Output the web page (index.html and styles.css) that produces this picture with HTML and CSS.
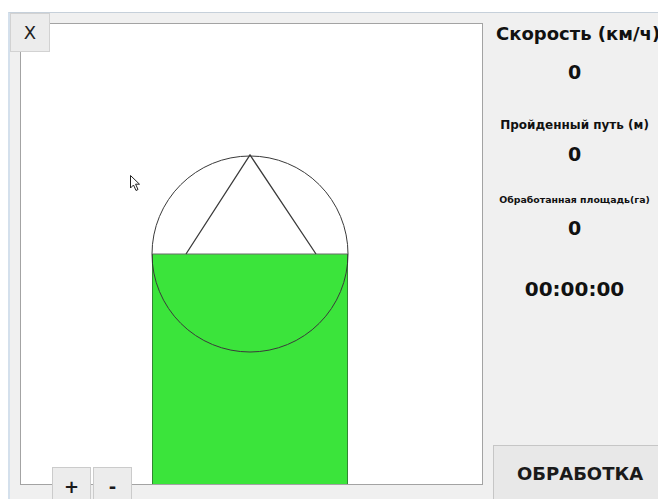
FILE: index.html
```html
<!DOCTYPE html>
<html lang="ru">
<head>
<meta charset="utf-8">
<title>Обработка поля</title>
<link rel="stylesheet" href="styles.css">
</head>
<body>
<div class="window">
  <div class="map-pane">
    <div class="map">
      <svg class="map-drawing" width="461" height="460" viewBox="21 24 461 460" xmlns="http://www.w3.org/2000/svg">
        <!-- processed strip -->
        <rect x="152" y="254" width="196" height="232" fill="#3be43b"/>
        <!-- implement marker: circle with heading triangle -->
        <circle cx="250" cy="254" r="98" fill="none" stroke="#3a3a3a" stroke-width="1"/>
        <line x1="152" y1="254" x2="348" y2="254" stroke="#6a6a6a" stroke-width="1.2"/>
        <polyline points="186,254 250,155 316,254" fill="none" stroke="#3a3a3a" stroke-width="1.3"/>
        <line x1="152.5" y1="254" x2="152.5" y2="486" stroke="#2a2a2a" stroke-width="1" opacity="0.5"/>
        <line x1="347.5" y1="254" x2="347.5" y2="486" stroke="#2a2a2a" stroke-width="1" opacity="0.5"/>
        <!-- mouse pointer -->
        <path d="M130.5 175.5 L130.5 188 L133.5 185 L136 190.5 L138 189.5 L135.6 184.2 L139.5 184.2 Z" fill="#fff" stroke="#222" stroke-width="1" stroke-linejoin="round"/>
      </svg>
    </div>
    <button class="btn btn-close">X</button>
    <div class="zoom">
      <button class="btn btn-zoom">+</button>
      <button class="btn btn-zoom">-</button>
    </div>
  </div>
  <div class="panel">
    <div class="title">Скорость (км/ч)</div>
    <div class="value value-speed">0</div>
    <div class="label label-path">Пройденный путь (м)</div>
    <div class="value value-near">0</div>
    <div class="label label-area">Обработанная площадь(га)</div>
    <div class="value value-near">0</div>
    <div class="time">00:00:00</div>
    <button class="btn btn-run">ОБРАБОТКА</button>
  </div>
</div>
</body>
</html>
```

FILE: styles.css
```css
html, body {
  margin: 0;
  padding: 0;
  background: #ffffff;
  overflow: hidden;
  width: 658px;
  height: 499px;
}

body {
  font-family: "DejaVu Sans", sans-serif;
  color: #111;
}

.window {
  margin: 12px 0 0 8px;
  height: 486px;
  width: 680px;
  background: #f0f0f0;
  border-top: 1px solid #c6d0da;
  border-left: 2px solid #d4e0ec;
  display: flex;
  position: relative;
}

.map-pane {
  position: relative;
  padding: 10px 0 0 10px;
  width: 463px;
  flex: none;
}

.map {
  width: 461px;
  height: 460px;
  background: #fff;
  border: 1px solid #a3a3a3;
  overflow: hidden;
}

.map-drawing {
  display: block;
}

.btn {
  font-family: "DejaVu Sans", sans-serif;
  background: #e9e9e9;
  border: 1px solid #cdcdcd;
  color: #1a1a1a;
  padding: 0;
  margin: 0;
  cursor: pointer;
}

.btn-close {
  position: absolute;
  left: 0;
  top: 0;
  width: 40px;
  height: 39px;
  font-size: 18px;
  color: #222;
  background: #ececec;
  border-color: #d2d2d2;
}

.zoom {
  position: absolute;
  left: 42px;
  top: 454px;
  display: flex;
  gap: 2px;
}

.btn-zoom {
  width: 39px;
  height: 34px;
  font-size: 18px;
  font-weight: bold;
  background: #ececec;
  border-color: #cbcbcb;
  padding-top: 4px;
}

.panel {
  width: 183px;
  flex: none;
  display: flex;
  flex-direction: column;
  align-items: center;
  padding-top: 10px;
}

.title {
  align-self: flex-start;
  margin-left: 13px;
  font-size: 18px;
  font-weight: bold;
  line-height: 22px;
  white-space: nowrap;
}

.value {
  font-size: 19px;
  font-weight: bold;
  line-height: 22px;
}

.value-speed {
  margin-top: 16px;
}

.value-near {
  margin-top: 11px;
}

.label {
  font-weight: bold;
  white-space: nowrap;
}

.label-path {
  margin-top: 35px;
  font-size: 12px;
  line-height: 14px;
}

.label-area {
  margin-top: 29px;
  font-size: 9.4px;
  line-height: 12px;
}

.time {
  margin-top: 38px;
  font-size: 20px;
  font-weight: bold;
  line-height: 24px;
}

.btn-run {
  align-self: flex-start;
  margin: auto 0 0 10px;
  width: 180px;
  height: 56px;
  font-size: 18px;
  font-weight: bold;
  text-align: left;
  padding: 0 0 0 23px;
  background: #e8e8e8;
  border-color: #c6c6c6;
  position: relative;
  top: 2px;
}
```
